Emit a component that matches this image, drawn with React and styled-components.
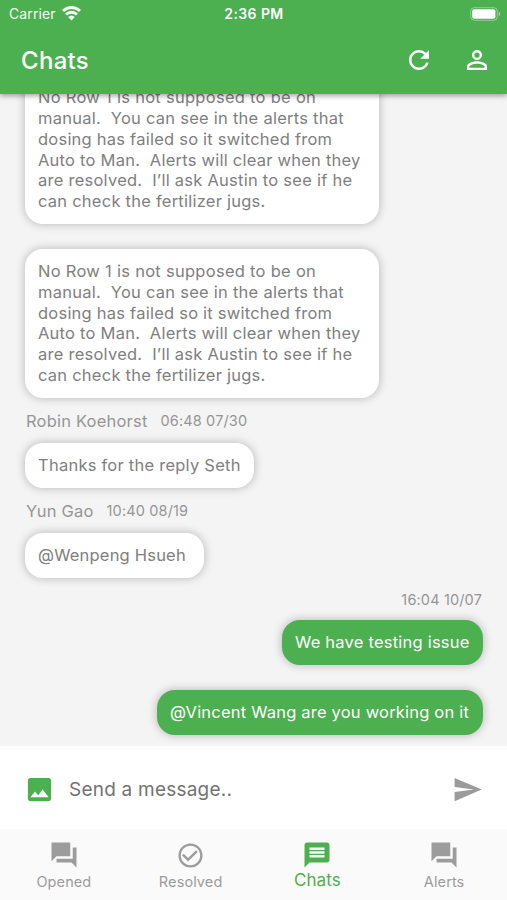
import React from 'react';
import styled, { createGlobalStyle } from 'styled-components';
import {
  MdCheckCircleOutline,
  MdImage,
  MdMessage,
  MdPersonOutline,
  MdRefresh,
  MdSend,
} from 'react-icons/md';

const GREEN = '#4caf50';

const alertLines = [
  ['No Row 1 is not supposed to be on', 0.28],
  ['manual.  You can see in the alerts that', 0.25],
  ['dosing has failed so it switched from', 0.23],
  ['Auto to Man.  Alerts will clear when they', 0.23],
  ['are resolved.  I’ll ask Austin to see if he', 0.25],
  ['can check the fertilizer jugs.', 0.24],
];

const messages = [
  { id: 1, width: 354, lines: alertLines },
  { id: 2, width: 354, lines: alertLines },
  {
    id: 3,
    width: 229,
    author: 'Robin Koehorst',
    time: '06:48 07/30',
    lines: [['Thanks for the reply Seth', 0.24]],
  },
  {
    id: 4,
    width: 179,
    author: 'Yun Gao',
    time: '10:40 08/19',
    lines: [['@Wenpeng Hsueh', 0.2]],
  },
  {
    id: 5,
    width: 201,
    mine: true,
    time: '16:04 10/07',
    lines: [['We have testing issue', 0.22]],
  },
  {
    id: 6,
    width: 326,
    mine: true,
    lines: [['@Vincent Wang are you working on it', 0.2]],
  },
];

function ForumIcon() {
  return (
    <svg width="30" height="30" viewBox="0 0 24 24" fill="currentColor">
      <path d="M22 6h-3v9H6v3h12l4 4V6zm-5 7V2H2v15l4-4h11z" />
    </svg>
  );
}

const tabs = [
  { label: 'Opened', icon: <ForumIcon /> },
  { label: 'Resolved', icon: <MdCheckCircleOutline size={29} /> },
  { label: 'Chats', icon: <MdMessage size={30} />, active: true },
  { label: 'Alerts', icon: <ForumIcon /> },
];

function Message({ width, author, time, mine, lines }) {
  return (
    <Entry $mine={mine}>
      {time ? (
        <Meta $mine={mine}>
          {author && <Author>{author}</Author>}
          <Time>{time}</Time>
        </Meta>
      ) : (
        <Spacer />
      )}
      <Bubble $mine={mine} $width={width}>
        {lines.map(([text, spacing]) => (
          <Line key={text} $spacing={spacing}>
            {text}
          </Line>
        ))}
      </Bubble>
    </Entry>
  );
}

export default function App() {
  return (
    <Screen>
      <GlobalStyle />
      <Header>
        <StatusBar>
          <Carrier>
            Carrier
            <svg width="19" height="15" viewBox="0 0 19 15" fill="none" stroke="#fff">
              <path d="M1 5a12.2 12.2 0 0 1 17 0" strokeWidth="2.9" />
              <path d="M4 8.5a7.8 7.8 0 0 1 11 0" strokeWidth="2.8" />
              <path d="M6.2 11a4.8 4.8 0 0 1 6.6 0L9.5 14.4z" fill="#fff" stroke="none" />
            </svg>
          </Carrier>
          <Clock>2:36 PM</Clock>
          <Battery>
            <svg width="31" height="14" viewBox="0 0 31 14">
              <rect x=".7" y=".7" width="26.6" height="12.6" rx="3.6" fill="none" stroke="#fff" strokeOpacity=".4" />
              <rect x="2.2" y="2.2" width="23.2" height="9.6" rx="2" fill="#fff" />
              <path d="M28.8 4.8v4.4c1.9-.8 1.9-3.6 0-4.4z" fill="#fff" fillOpacity=".5" />
            </svg>
          </Battery>
        </StatusBar>
        <Toolbar>
          <Title>Chats</Title>
          <Actions>
            <MdRefresh size={30} />
            <MdPersonOutline size={30} />
          </Actions>
        </Toolbar>
      </Header>
      <Messages>
        {messages.map((message) => (
          <Message key={message.id} {...message} />
        ))}
      </Messages>
      <Composer>
        <MdImage size={31} color={GREEN} />
        <Placeholder>Send a message..</Placeholder>
        <MdSend size={31} color="#9b9b9b" />
      </Composer>
      <TabBar>
        {tabs.map(({ label, icon, active }) => (
          <Tab key={label} $active={active}>
            <TabIcon>{icon}</TabIcon>
            <TabLabel $active={active}>{label}</TabLabel>
          </Tab>
        ))}
      </TabBar>
    </Screen>
  );
}

const GlobalStyle = createGlobalStyle`
  * {
    box-sizing: border-box;
  }

  body {
    margin: 0;
    font-family: Inter, 'Liberation Sans', sans-serif;
  }

  svg {
    display: block;
    flex: none;
  }
`;

const Screen = styled.div`
  display: flex;
  flex-direction: column;
  width: 507px;
  height: 900px;
  overflow: hidden;
  background: #f4f4f4;
`;

const Header = styled.header`
  position: relative;
  z-index: 1;
  flex: none;
  height: 94px;
  color: #fff;
  background: ${GREEN};
  box-shadow: 0 2px 5px rgba(0, 0, 0, 0.35);
`;

const StatusBar = styled.div`
  display: grid;
  grid-template-columns: 1fr auto 1fr;
  align-items: center;
  height: 27px;
  padding: 0 6px 0 9px;
`;

const Carrier = styled.div`
  display: flex;
  align-items: center;
  gap: 6px;
  font-size: 14px;
  letter-spacing: 0.1px;
  opacity: 0.95;
`;

const Clock = styled.div`
  margin-right: 2px;
  font-size: 14px;
  font-weight: 600;
  letter-spacing: 0.4px;
`;

const Battery = styled.div`
  justify-self: end;
`;

const Toolbar = styled.div`
  display: flex;
  align-items: center;
  justify-content: space-between;
  height: 66px;
  padding: 0 15px 0 21px;
`;

const Title = styled.h1`
  margin: 0;
  font-size: 24px;
  font-weight: 500;
  letter-spacing: 0.3px;
`;

const Actions = styled.div`
  display: flex;
  gap: 28px;
`;

const Messages = styled.main`
  display: flex;
  flex: 1;
  flex-direction: column;
  justify-content: flex-end;
  min-height: 0;
  padding: 0 24px 11px 25px;
  overflow: hidden;
`;

const Entry = styled.section`
  display: flex;
  flex: none;
  flex-direction: column;
  align-items: ${({ $mine }) => ($mine ? 'flex-end' : 'flex-start')};
`;

const Spacer = styled.div`
  height: 25px;
`;

const Meta = styled.div`
  display: flex;
  align-items: center;
  gap: 13px;
  height: ${({ $mine }) => ($mine ? 42 : 45)}px;
  padding: 0 1px;
  color: #969696;
`;

const Author = styled.span`
  font-size: 16.5px;
  letter-spacing: 0.2px;
`;

const Time = styled.span`
  font-size: 14.5px;
  letter-spacing: 0.15px;
`;

const Bubble = styled.div`
  width: ${({ $width }) => $width}px;
  padding: 12px 13px 12.2px;
  border-radius: 18px;
  color: ${({ $mine }) => ($mine ? '#fff' : '#808080')};
  background: ${({ $mine }) => ($mine ? GREEN : '#fff')};
  box-shadow: 0 0 8px 1px rgba(0, 0, 0, 0.22);
`;

const Line = styled.div`
  font-size: 16.5px;
  line-height: 20.8px;
  letter-spacing: ${({ $spacing }) => $spacing}px;
  white-space: pre;
`;

const Composer = styled.div`
  position: relative;
  display: flex;
  flex: none;
  align-items: center;
  height: 83px;
  padding: 3px 24px 0 24px;
  background: #fff;
`;

const Placeholder = styled.div`
  flex: 1;
  margin-left: 14px;
  color: #737373;
  font-size: 19px;
  letter-spacing: 0.22px;
`;

const TabBar = styled.nav`
  display: flex;
  flex: none;
  height: 71px;
  background: #fafafa;
`;

const Tab = styled.div`
  display: flex;
  flex: 1;
  flex-direction: column;
  align-items: center;
  padding: 11px 0 0 1px;
  color: ${({ $active }) => ($active ? GREEN : '#9c9c9c')};
`;

const TabIcon = styled.div`
  display: grid;
  place-items: center;
  height: 30px;
`;

const TabLabel = styled.span`
  margin-top: ${({ $active }) => ($active ? 0 : 2)}px;
  font-size: ${({ $active }) => ($active ? 17 : 14.5)}px;
  line-height: 20px;
  letter-spacing: 0.1px;
`;
